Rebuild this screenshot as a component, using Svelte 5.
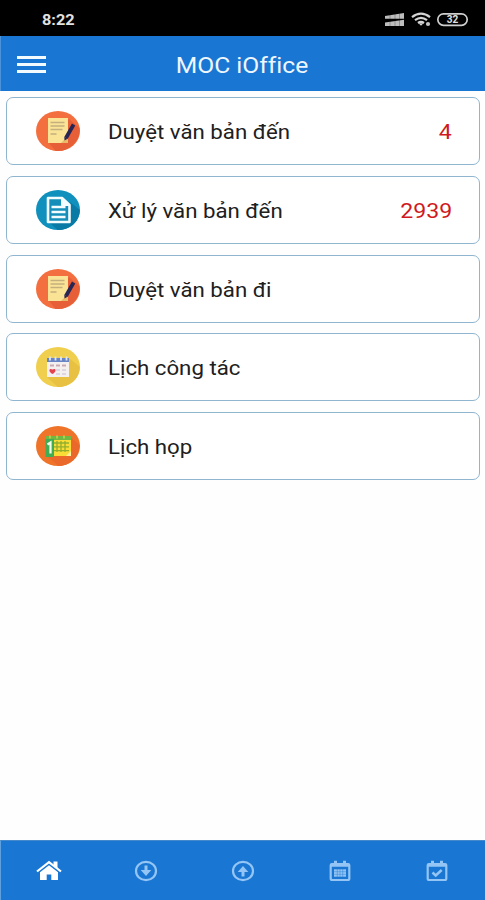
<script>
  const rows = [
    { icon: 'note', label: 'Duyệt văn bản đến', count: 4 },
    { icon: 'doc', label: 'Xử lý văn bản đến', count: 2939 },
    { icon: 'note', label: 'Duyệt văn bản đi' },
    { icon: 'calendar', label: 'Lịch công tác' },
    { icon: 'meeting', label: 'Lịch họp' },
  ];
  const tabs = ['home', 'down', 'up', 'month', 'check'];
  let active = 'home';
</script>

<div class="screen">
  <div class="status">
    <span class="time">8:22</span>
    <svg class="sys" width="86" height="16" viewBox="0 0 86 16">
      <path d="M0 4 19 1v5.8H0zM0 10.500 19 7.800v6.200H0z" fill="#bdbdbd" />
      <path d="M5 2v12M10 1v13M14.500 1v13" stroke="#000" stroke-width=".6" opacity=".4" />
      <g fill="none" stroke="#d4d4d4" stroke-width="2.200">
        <path d="M27 5.200q9-7 18 0M30 8.200q6-4.600 12 0M33 11q3-2.200 6 0" />
      </g>
      <path d="m33.500 11.200 2.500 2.600 2.500-2.600z" fill="#d4d4d4" />
      <circle cx="43" cy="12" r="2.100" fill="#c4c4c4" />
      <rect x="52.800" y="1.800" width="29.400" height="11.600" rx="5.800" fill="none" stroke="#cfcfcf" stroke-width="1.700" />
      <text x="67.500" y="11.200" text-anchor="middle">32</text>
    </svg>
  </div>

  <header>
    <button class="burger" aria-label="Menu"><i></i><i></i><i></i></button>
    <h1>MOC iOffice</h1>
  </header>

  <main>
    {#each rows as row}
      <div class="card">
        <svg class="pic" viewBox="0 0 44 40" width="44" height="40">
          {#if row.icon === 'note'}
            <ellipse cx="22" cy="20" rx="22" ry="20" fill="#f46f40" />
            <path d="M13 32 33 8l10.500 9c1.500 13-11 24-24 23z" fill="#e65f37" />
            <path d="M12 7h20v20l-5 5H12z" fill="#fbe395" />
            <path d="M32 25v7h-7z" fill="#eab969" />
            <path d="M14.500 11.500h14M14.500 15h14M14.500 18.500h12M14.500 23h6" stroke="#c4b07f" stroke-width="1.300" />
            <path d="m30 27 7.600-13.500" stroke="#272554" stroke-width="3.800" />
            <path d="m28.300 25.800 3.200 2-3 1.800z" fill="#272554" />
          {:else if row.icon === 'doc'}
            <ellipse cx="22" cy="20" rx="22" ry="20" fill="#1090bd" />
            <path d="m34 12 9.800 8c-.5 13-11 20-22 20l-9-8z" fill="#087aa5" />
            <path d="M12 8h14l7.500 7v17H12z" fill="#158fb9" stroke="#f3fcff" stroke-width="2.600" stroke-linejoin="round" />
            <path d="M25.500 8v7.500h8z" fill="#f3fcff" stroke="#f3fcff" />
            <path d="M15.500 17h14M15.500 22h14M15.500 27h14" stroke="#f3fcff" stroke-width="2.600" />
          {:else if row.icon === 'calendar'}
            <ellipse cx="22" cy="20" rx="22" ry="20" fill="#f0ce4e" />
            <path d="m33 11 10.800 9c-.5 13-11 20-22 20L11 30z" fill="#e8c143" />
            <path d="M11 12h22v18H11z" fill="#f4f0ef" />
            <path d="M11 11h22v4H11z" fill="#6984c5" />
            <path d="M14 9.500v4M19.500 9.500v4M25 9.500v4M30.500 9.500v4" stroke="#dce6f4" stroke-width="1.800" />
            <path d="M14 18.500h4M20 18.500h4M26 18.500h4" stroke="#c9a9b3" stroke-width="2.200" />
            <path d="M20 23h4M26 23h4M20 27h4M26 27h4" stroke="#ddd5df" stroke-width="2" />
            <path d="M16.500 27c-5-3-3-6.500 0-4.500 3-2 5 1.500 0 4.500z" fill="#e54250" />
          {:else}
            <ellipse cx="22" cy="20" rx="22" ry="20" fill="#ef7429" />
            <path d="m34 11 9.500 8c0 12-10 21-21 21L11 30z" fill="#e9682a" />
            <path d="M10 10h25v20H10z" fill="#f9dc35" />
            <path d="M10 10h25v4H10z" fill="#73b743" />
            <path d="M18 17h15M18 20.800h15M18 24.600h15M21 15v11M25 15v11M29 15v11" stroke="#91ae2c" stroke-width="1.300" />
            <path d="M9.500 13H18v18H9.500z" fill="#40ad55" />
            <path d="m11.500 18.500 3-2v11" fill="none" stroke="#f5ffe9" stroke-width="2.200" />
            <path d="M35 25v5h-5z" fill="#fff19a" />
            <path d="M14 9.500v3M21 9.500v3M28 9.500v3" stroke="#c8d951" stroke-width="1.400" />
          {/if}
        </svg>
        <span class="label">{row.label}</span>
        {#if row.count}
          <span class="count">{row.count}</span>
        {/if}
      </div>
    {/each}
  </main>

  <nav>
    {#each tabs as tab}
      <button class:active={tab === active} aria-label={tab} on:click={() => (active = tab)}>
        <svg viewBox="0 0 26 22" width="26" height="22">
          {#if tab === 'home'}
            <path d="m1 11.500 12-9.300 12 9.300" fill="none" stroke="currentColor" stroke-width="2.200" />
            <path d="M17.500 1.500h4v7l-4-3z" fill="currentColor" />
            <path d="m13 5.200 9 7V20h-6.700v-5.500h-4.600V20H4v-7.800z" fill="currentColor" />
          {:else if tab === 'down' || tab === 'up'}
            <ellipse cx="13" cy="11" rx="10" ry="9.200" fill="none" stroke="currentColor" stroke-width="2.200" />
            {#if tab === 'down'}
              <path d="M11.500 5.500h3v4.500h3.800L13 16l-5.300-6h3.800z" fill="currentColor" />
            {:else}
              <path d="M11.500 16.500h3V12h3.800L13 6l-5.300 6h3.800z" fill="currentColor" />
            {/if}
          {:else}
            <rect x="3.700" y="4" width="18.600" height="16" rx="1.500" fill="none" stroke="currentColor" stroke-width="2.200" />
            <path d="M3.500 3.500h19v3.300h-19zM7 .7h3v4H7zM16 .7h3v4h-3z" fill="currentColor" />
            {#if tab === 'month'}
              <path d="M7 9.300h12v7.400H7z" fill="currentColor" />
              <path d="M10.300 9v8M13 9v8M15.700 9v8M7 11.700h12M7 14.300h12" stroke="#1976d2" stroke-width=".4" />
            {:else}
              <path d="m8.500 12.500 3.200 3 6-5.500" fill="none" stroke="currentColor" stroke-width="2.500" />
            {/if}
          {/if}
        </svg>
      </button>
    {/each}
  </nav>
</div>

<style>
  :global(body) { margin: 0; }
  .screen {
    display: flex;
    flex-direction: column;
    width: 100%;
    height: 900px;
    background: #fefefe;
    font-family: Roboto, "Noto Sans", sans-serif;
    overflow: hidden;
  }
  .status {
    display: flex;
    justify-content: space-between;
    align-items: center;
    box-sizing: border-box;
    height: 36px;
    padding: 3px 14px 0 42px;
    background: #000;
  }
  .time {
    color: #e2e2e2;
    font-size: 14px;
    font-weight: 700;
    transform: scaleX(1.16);
    transform-origin: left;
  }
  .sys text { fill: #e0e0e0; font-size: 10px; font-weight: 700; }
  header {
    display: grid;
    grid-template-columns: 64px 1fr 66px;
    align-items: center;
    box-sizing: border-box;
    height: 55px;
    padding-top: 2px;
    background: #1976d2;
    border-left: 1px solid #4a93da;
  }
  button { padding: 0; border: 0; background: none; }
  .burger {
    display: flex;
    flex-direction: column;
    gap: 4px;
    width: 29px;
    margin-left: 16px;
  }
  .burger i { height: 3px; width: 100%; background: #f3fbff; }
  h1 {
    margin: 0;
    padding-top: 2px;
    color: #eef7ff;
    font-size: 22px;
    font-weight: 400;
    font-variant-ligatures: none;
    line-height: 28px;
    text-align: center;
    transform: scaleX(1.12);
  }
  main {
    display: flex;
    flex: 1;
    flex-direction: column;
    gap: 10.75px;
    padding: 6px 5px 0 6px;
  }
  .card {
    display: flex;
    align-items: center;
    box-sizing: border-box;
    height: 68px;
    padding: 0 27px 0 29px;
    border: 1px solid #90b5cf;
    border-radius: 7px;
    background: #fff;
  }
  .pic { flex: none; }
  .label {
    flex: 1;
    margin-left: 27.5px;
    padding-top: 2px;
    color: #202020;
    font-size: 20px;
    white-space: nowrap;
    transform: scaleX(1.112);
    transform-origin: left;
  }
  .count {
    padding-top: 2px;
    color: #d01920;
    font-size: 21px;
    transform: scaleX(1.1);
    transform-origin: right;
  }
  nav {
    display: grid;
    grid-template-columns: repeat(5, 1fr);
    box-sizing: border-box;
    height: 60px;
    background: #1976d2;
    border-top: 1px solid #4389cb;
    border-left: 1px solid #5fa0de;
  }
  nav button {
    display: flex;
    align-items: center;
    justify-content: center;
    color: #94c5f4;
  }
  nav .active { color: #fff; }
</style>
